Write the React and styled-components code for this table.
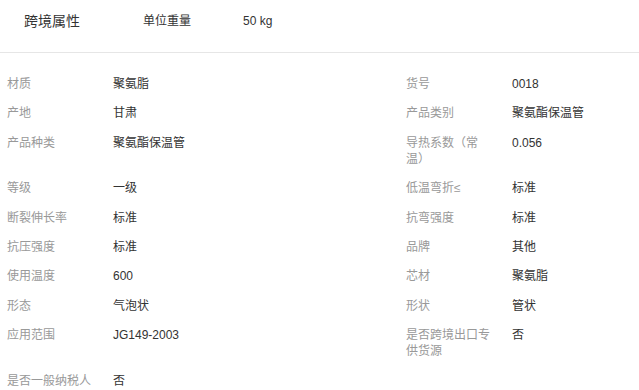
import React from "react";
import styled, { createGlobalStyle } from "styled-components";

const GlobalStyle = createGlobalStyle`
  body {
    margin: 0;
    background: #fff;
    font-family: "Liberation Sans", Arial, "Noto Sans CJK SC", sans-serif;
  }
`;

const attrs = [
  ["材质", "聚氨脂", "货号", "0018"],
  ["产地", "甘肃", "产品类别", "聚氨酯保温管"],
  ["产品种类", "聚氨酯保温管", "导热系数（常温）", "0.056"],
  ["等级", "一级", "低温弯折≤", "标准"],
  ["断裂伸长率", "标准", "抗弯强度", "标准"],
  ["抗压强度", "标准", "品牌", "其他"],
  ["使用温度", "600", "芯材", "聚氨脂"],
  ["形态", "气泡状", "形状", "管状"],
  ["应用范围", "JG149-2003", "是否跨境出口专供货源", "否"],
  ["是否一般纳税人", "否"],
];

export default function App() {
  return (
    <Page>
      <GlobalStyle />
      <Header>
        <Title>跨境属性</Title>
        <HeadLabel>单位重量</HeadLabel>
        <HeadValue>50 kg</HeadValue>
      </Header>
      <Grid>
        {attrs.map((row, i) => (
          <React.Fragment key={i}>
            <Cell>
              <Label>{row[0]}</Label>
              <Value>{row[1]}</Value>
            </Cell>
            {row[2] ? (
              <Cell>
                <Label>{row[2]}</Label>
                <Value>{row[3]}</Value>
              </Cell>
            ) : (
              <div />
            )}
          </React.Fragment>
        ))}
      </Grid>
    </Page>
  );
}

const Page = styled.div`
  width: 639px;
  height: 390px;
  overflow: hidden;
`;

const Header = styled.div`
  display: flex;
  align-items: center;
  padding: 13px 0 23px 24px;
  border-bottom: 1px solid #e6e6e6;
  line-height: 16px;
`;

const Title = styled.div`
  width: 119px;
  font-size: 14px;
  color: #333;
`;

const HeadLabel = styled.div`
  width: 100px;
  font-size: 12px;
  color: #333;
`;

const HeadValue = styled.div`
  font-size: 12px;
  color: #333;
`;

const Grid = styled.div`
  display: grid;
  grid-template-columns: 399px 1fr;
  row-gap: 13.4px;
  padding: 23px 0 0 7px;
`;

const Cell = styled.div`
  display: flex;
  align-items: flex-start;
  font-size: 12px;
  line-height: 16px;
`;

const Label = styled.div`
  width: 90px;
  margin-right: 16px;
  color: #999;
`;

const Value = styled.div`
  color: #333;
`;
